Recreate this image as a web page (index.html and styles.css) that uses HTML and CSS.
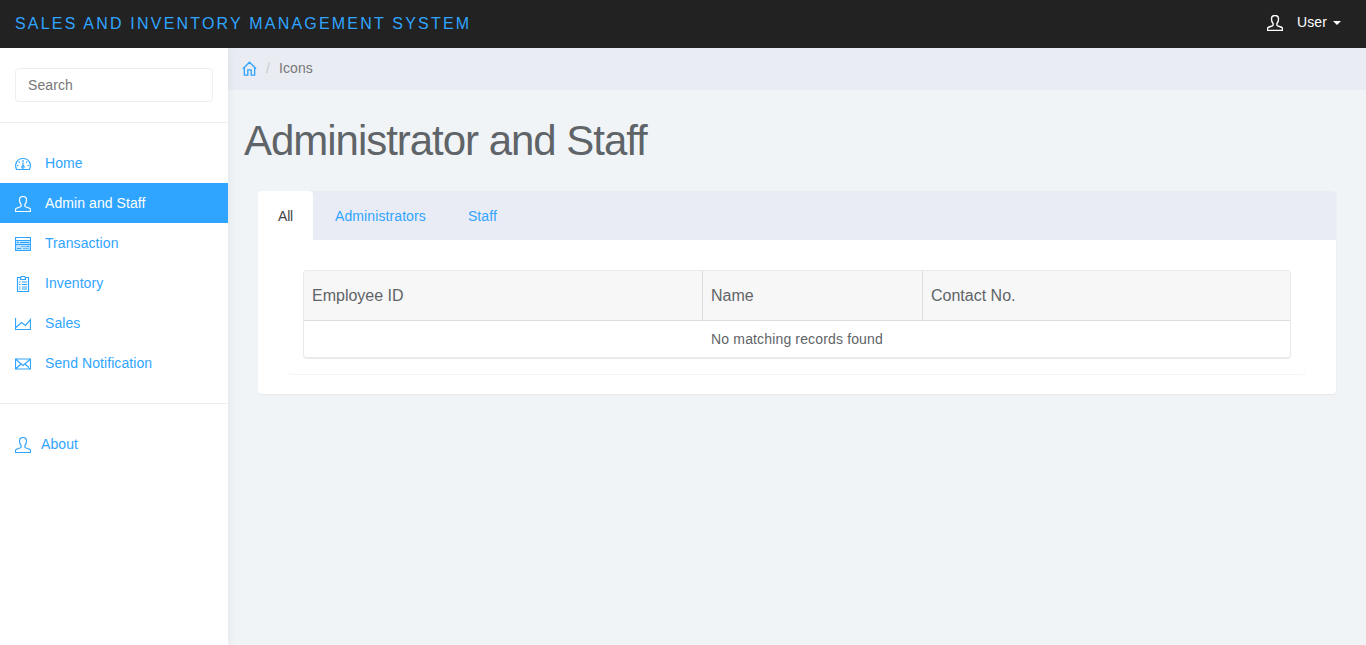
FILE: index.html
```html
<!DOCTYPE html>
<html lang="en">
<head>
<meta charset="utf-8">
<title>Sales and Inventory Management System</title>
<link rel="stylesheet" href="styles.css">
</head>
<body>
<svg class="defs" aria-hidden="true">
  <symbol id="user" viewBox="0 0 16 16"><path d="M8 .5C5.800.5 4.500 1.800 4.500 4c0 2 .5 3.500 1.600 4.500v1.700C5.500 11.500 1.500 11.500.5 13v2.500h15V13c-1-1.500-5-1.500-5.600-2.800V8.500C11 7.500 11.500 6 11.500 4 11.500 1.800 10.200.5 8 .5z"/></symbol>
  <symbol id="dash" viewBox="0 0 16 16"><path d="M1.600 13.500C-.8 8.500 1.700 2.500 8 2.500s8.800 6 6.400 11zM8 4v2M3.700 5.500l1 1M12.300 5.500l-1 1M2 9.500h1.500M12.500 9.500H14M8 6.500v4"/><circle cx="8" cy="11" r="1.200"/></symbol>
  <symbol id="table" viewBox="0 0 16 16"><path class="tint" d="M1 5h14v9H1z"/><path d="M.5 1.500h15v13H.5zM1 4.500h14M2 6.500h2M5 6.500h9M1 8.500h14M2 12.500h4M11.500 10.500H14"/><path d="M6 10.500h5M8 12.500h6" opacity=".6"/></symbol>
  <symbol id="clip" viewBox="0 0 16 16"><path d="M5.500 1.500h-3v14h11v-14h-3M5.500 1.500v2h5v-2l-1-1h-3zM4 6h1.500M4 8.500h1.500M4 11h1.500M4 13h1.500M7 6h5M7 8.500h5M7 11h5M7 13h5"/></symbol>
  <symbol id="line" viewBox="0 0 16 16"><path d="M.5 2v11.500h15V3.500l-5 6-4-3L1 11.500"/></symbol>
  <symbol id="mail" viewBox="0 0 16 16"><path d="M.5 3h15v10H.5zM1 3.500l7 6 7-6M1 12.500l5-4.500M15 12.500l-5-4.500"/></symbol>
  <symbol id="home" viewBox="0 0 16 16"><path d="M1 8.200L8 1.300l7 6.900M2.500 7v8h3.700V9.500h3.600V15h3.700V7"/></symbol>
</svg>
<header class="topbar">
  <a class="brand">SALES AND INVENTORY MANAGEMENT SYSTEM</a>
  <div class="account"><svg class="icon"><use href="#user"/></svg><span>User</span><i class="caret"></i></div>
</header>
<div class="shell">
  <aside class="sidebar">
    <form class="search"><input type="text" placeholder="Search"></form>
    <nav class="menu">
      <a><svg class="icon"><use href="#dash"/></svg>Home</a>
      <a class="active"><svg class="icon"><use href="#user"/></svg>Admin and Staff</a>
      <a><svg class="icon"><use href="#table"/></svg>Transaction</a>
      <a><svg class="icon"><use href="#clip"/></svg>Inventory</a>
      <a><svg class="icon"><use href="#line"/></svg>Sales</a>
      <a><svg class="icon"><use href="#mail"/></svg>Send Notification</a>
    </nav>
    <nav class="menu about"><a><svg class="icon"><use href="#user"/></svg>About</a></nav>
  </aside>
  <main class="main">
    <div class="crumbs"><svg class="icon"><use href="#home"/></svg><span class="slash">/</span><span>Icons</span></div>
    <h1>Administrator and Staff</h1>
    <section class="panel">
      <div class="tabs"><a class="active">All</a><a>Administrators</a><a>Staff</a></div>
      <div class="body">
        <div class="inner">
          <table>
            <colgroup><col class="c1"><col class="c2"><col></colgroup>
            <thead><tr><th>Employee ID</th><th>Name</th><th>Contact No.</th></tr></thead>
            <tbody><tr><td colspan="3">No matching records found</td></tr></tbody>
          </table>
        </div>
      </div>
    </section>
  </main>
</div>
</body>
</html>
```
FILE: styles.css
```css
* { box-sizing: border-box; }
body {
  margin: 0;
  height: 645px;
  display: flex;
  flex-direction: column;
  background: #f1f4f7;
  color: #5f6468;
  font: 14px/20px "Liberation Sans", Arial, sans-serif;
  overflow: hidden;
}
.defs { position: absolute; width: 0; height: 0; }
.icon { width: 16px; height: 16px; flex: none; fill: none; stroke: currentColor; stroke-width: 1.2; }
.tint { fill: currentColor; opacity: .3; stroke: none; }
.topbar {
  height: 48px;
  flex: none;
  background: #222;
  display: flex;
  align-items: center;
  justify-content: space-between;
  padding: 0 25px 0 15px;
}
.brand { color: #30a5ff; font-size: 16px; letter-spacing: 2.2px; line-height: 20px; }
.account { display: flex; align-items: center; color: #fff; padding-bottom: 4px; letter-spacing: .1px; }
.account .icon { margin: 2px 14px 0 0; stroke-width: 1.4; }
.caret { margin: 2px 0 0 6px; border: 4px solid transparent; border-top-color: #fff; border-bottom: 0; }
.shell { flex: 1; display: flex; }
.sidebar { width: 228px; background: #fff; box-shadow: 1px 0 10px rgba(0, 0, 0, .05); z-index: 1; }
.search { padding: 20px 15px; height: 75px; border-bottom: 1px solid #eee; }
.search input {
  display: block;
  width: 198px;
  height: 34px;
  border: 1px solid #eee;
  border-radius: 4px;
  padding: 6px 12px;
  font: inherit;
  letter-spacing: .1px;
}
.search input::placeholder { color: #777; opacity: 1; }
.menu { padding: 20px 0; letter-spacing: .08px; }
.menu a { display: flex; align-items: center; gap: 14px; height: 40px; padding: 0 15px; color: #30a5ff; }
.menu .icon { margin-top: 2px; }
.menu .active { background: #30a5ff; color: #fff; }
.about { border-top: 1px solid #eee; }
.about a { gap: 10px; }
.main { flex: 1; min-width: 0; }
.crumbs { height: 42px; background: #e9ecf2; display: flex; align-items: center; padding: 0 14px 2px; color: #777; letter-spacing: .1px; }
.crumbs .icon { color: #30a5ff; width: 15px; height: 15px; stroke-width: 1.4; }
.slash { color: #ccc; margin: 0 9px; }
h1 { margin: 27px 15px 0 16px; font-size: 42px; line-height: 48px; font-weight: 400; letter-spacing: -1.03px; }
.panel { margin: 26px 30px 0; background: #fff; border-radius: 4px; box-shadow: 0 1px 1px rgba(0, 0, 0, .05), 1px 0 1px rgba(0, 0, 0, .02); }
.tabs { display: flex; gap: 2px; height: 49px; background: #e9ecf4; border-radius: 4px 4px 0 0; }
.tabs a { padding: 15px 20px; color: #30a5ff; letter-spacing: .1px; }
.tabs .active { width: 55px; letter-spacing: -.2px; background: #fff; color: #444; border-radius: 4px 4px 0 0; }
.body { padding: 15px 30px 20px; }
.inner { padding: 15px; border-radius: 4px; box-shadow: 0 1px 1px rgba(0, 0, 0, .05), 0 0 1px rgba(0, 0, 0, .03); }
table {
  width: 100%;
  table-layout: fixed;
  border: 1px solid #eaeaea;
  border-bottom-width: 2px;
  border-radius: 4px;
  border-spacing: 0;
  overflow: hidden;
}
.c1 { width: 399px; }
.c2 { width: 220px; }
th {
  height: 50px;
  padding: 0 8px;
  background: #f7f7f7;
  border-right: 1px solid #ddd;
  border-bottom: 1px solid #ddd;
  text-align: left;
  font-size: 16px;
  font-weight: 400;
}
th:last-child { border-right: 0; }
td { height: 36px; padding: 0; text-align: center; letter-spacing: .15px; }
```
